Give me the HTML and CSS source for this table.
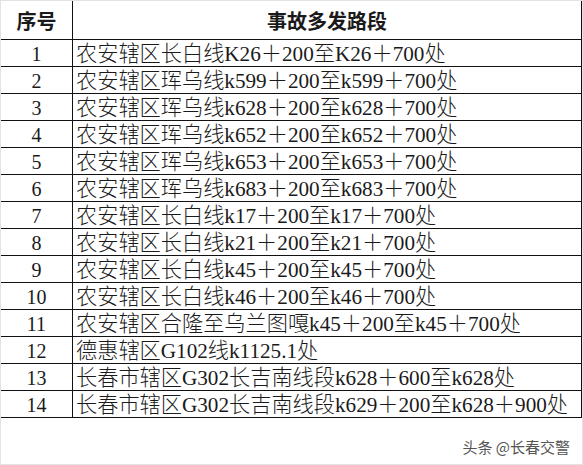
FILE: index.html
```html
<!DOCTYPE html>
<html lang="zh-CN">
<head>
<meta charset="utf-8">
<title>事故多发路段</title>
<link rel="stylesheet" href="styles.css">
</head>
<body>
<div class="frame">
  <div class="grid">
    <div class="cell head">序号</div>
    <div class="cell head">事故多发路段</div>

    <div class="cell num">1</div><div class="cell road">农安辖区长白线K26＋200至K26＋700处</div>
    <div class="cell num">2</div><div class="cell road">农安辖区珲乌线k599＋200至k599＋700处</div>
    <div class="cell num">3</div><div class="cell road">农安辖区珲乌线k628＋200至k628＋700处</div>
    <div class="cell num">4</div><div class="cell road">农安辖区珲乌线k652＋200至k652＋700处</div>
    <div class="cell num">5</div><div class="cell road">农安辖区珲乌线k653＋200至k653＋700处</div>
    <div class="cell num">6</div><div class="cell road">农安辖区珲乌线k683＋200至k683＋700处</div>
    <div class="cell num">7</div><div class="cell road">农安辖区长白线k17＋200至k17＋700处</div>
    <div class="cell num">8</div><div class="cell road">农安辖区长白线k21＋200至k21＋700处</div>
    <div class="cell num">9</div><div class="cell road">农安辖区长白线k45＋200至k45＋700处</div>
    <div class="cell num">10</div><div class="cell road">农安辖区长白线k46＋200至k46＋700处</div>
    <div class="cell num">11</div><div class="cell road">农安辖区合隆至乌兰图嘎k45＋200至k45＋700处</div>
    <div class="cell num">12</div><div class="cell road">德惠辖区G102线k1125.1处</div>
    <div class="cell num">13</div><div class="cell road">长春市辖区G302长吉南线段k628＋600至k628处</div>
    <div class="cell num">14</div><div class="cell road">长春市辖区G302长吉南线段k629＋200至k628＋900处</div>
  </div>
  <div class="mark">头条 @长春交警</div>
</div>
</body>
</html>
```

FILE: styles.css
```css
html, body {
  margin: 0;
  padding: 0;
  background: #ffffff;
}

.frame {
  width: 583px;
  height: 465px;
  box-sizing: border-box;
  border: 1px solid #e3e3e3;
  background: #ffffff;
  overflow: hidden;
}

.grid {
  display: grid;
  grid-template-columns: 72px 509px;
  grid-template-rows: 39px;
  grid-auto-rows: 27px;
}

.cell {
  box-sizing: border-box;
  border-right: 1px solid #111111;
  border-bottom: 1px solid #111111;
  display: flex;
  align-items: center;
  color: #1a1a1a;
  white-space: nowrap;
  overflow: hidden;
}

.head {
  justify-content: center;
  font-family: "Noto Sans CJK SC", sans-serif;
  font-weight: 700;
  font-size: 20px;
  line-height: 1;
  padding-top: 2px;
}

.num {
  justify-content: center;
  font-family: "Liberation Serif", serif;
  font-size: 20px;
  line-height: 1;
  padding-top: 2px;
}

.road {
  justify-content: flex-start;
  padding-left: 3px;
  padding-top: 3px;
  font-family: "Liberation Serif", "Noto Sans CJK SC", serif;
  font-weight: 300;
  font-size: 21.2px;
  line-height: 1;
}

.mark {
  text-align: right;
  padding: 19px 12px 0 0;
  font-family: "Noto Sans CJK SC", sans-serif;
  font-size: 15px;
  line-height: 20px;
  color: #555555;
  text-shadow: 0 0 1px #ffffff;
}
```
